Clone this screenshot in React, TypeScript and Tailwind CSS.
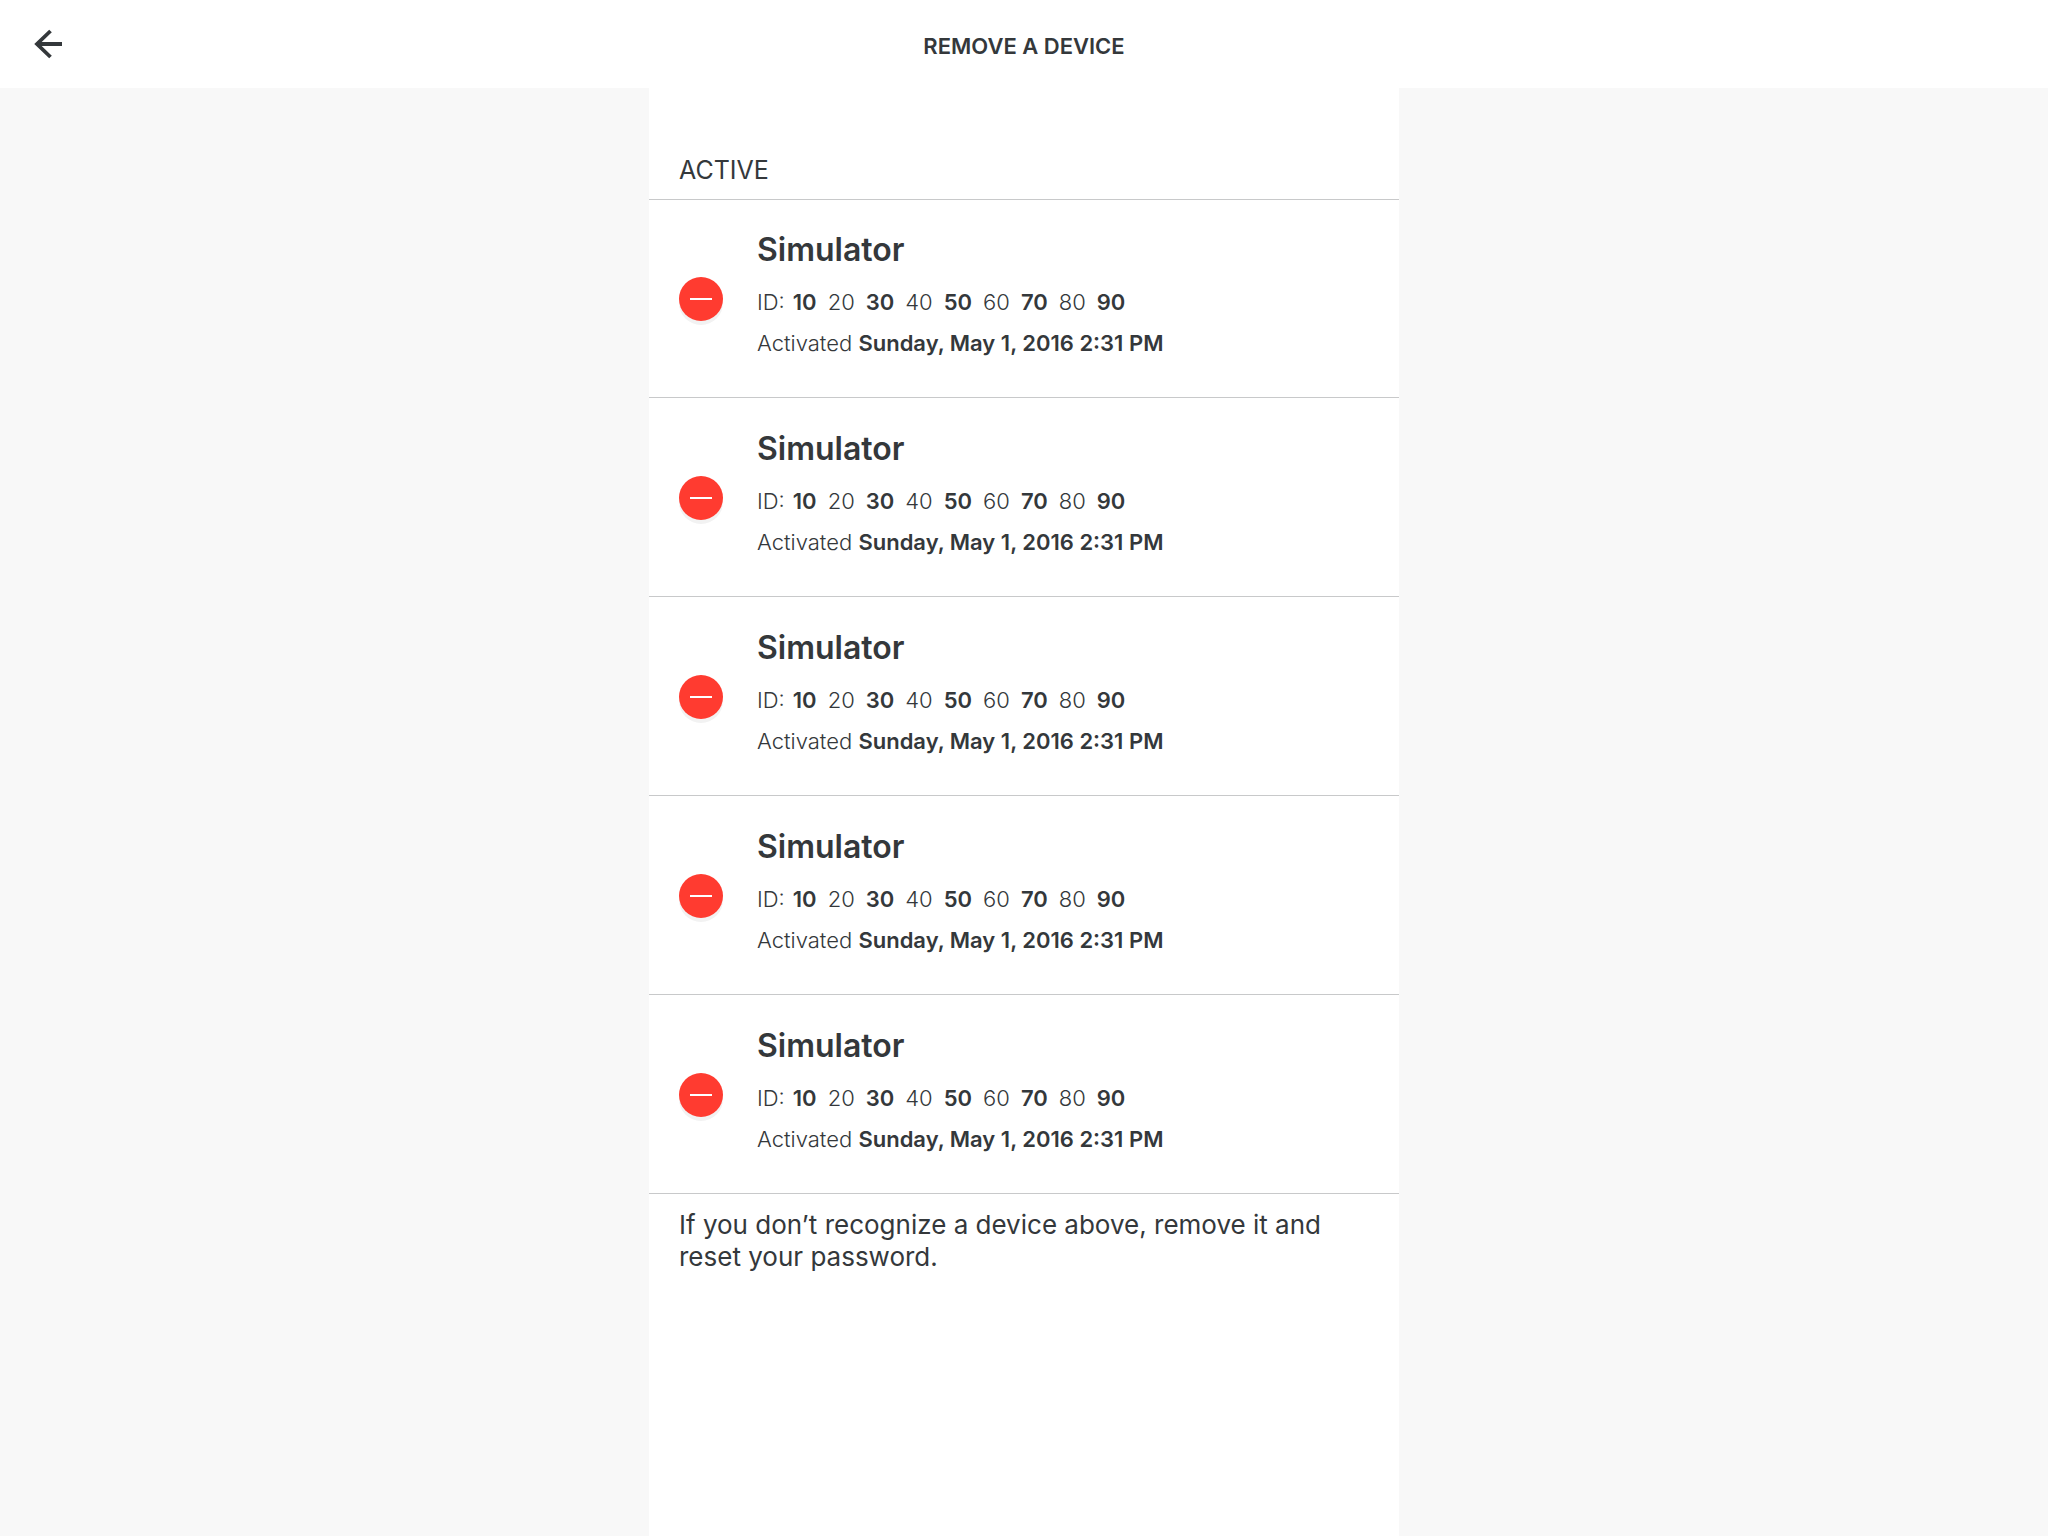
const devices = [1, 2, 3, 4, 5].map((id) => ({
  id,
  name: "Simulator",
  groups: ["10", "20", "30", "40", "50", "60", "70", "80", "90"],
  activated: "Sunday, May 1, 2016 2:31 PM",
}));

type Device = (typeof devices)[number];

function DeviceRow({ device }: { device: Device }) {
  return (
    <li className="flex items-center border-b border-[#c8c9ca] px-[30px] pt-[29px] pb-[27px]">
      <button
        type="button"
        aria-label={`Remove ${device.name}`}
        className="flex size-11 shrink-0 items-center justify-center rounded-full bg-[#ff3b30] shadow-[0_4px_0_#f2f2f2]"
      >
        <span className="h-0.5 w-[22px] bg-white" />
      </button>
      <div className="ml-[34px] pb-[6px]">
        <h3 className="text-[32px] leading-11 font-semibold">{device.name}</h3>
        <p className="mt-[10px] flex text-[22px] leading-[41px] font-light">
          <span className="mr-2">ID:</span>
          <span className="flex gap-[11px]">
            {device.groups.map((group, i) => (
              <span key={group} className={i % 2 === 0 ? "font-semibold" : "font-light"}>
                {group}
              </span>
            ))}
          </span>
        </p>
        <p className="text-[22px] leading-[41px] font-light">
          Activated <span className="font-semibold">{device.activated}</span>
        </p>
      </div>
    </li>
  );
}

export default function App() {
  return (
    <div className="flex min-h-screen flex-col bg-[#f8f8f8] font-['Inter',sans-serif] text-[#34383b]">
      <header className="grid h-[88px] grid-cols-[1fr_auto_1fr] items-center bg-white px-8">
        <button type="button" aria-label="Back" className="w-8">
          <svg viewBox="0 0 32 32" className="size-8" fill="none" stroke="currentColor" strokeWidth="3.8">
            <path d="M18.5 3 L5 16 L18.5 29 M5 16 H30" />
          </svg>
        </button>
        <h1 className="pt-1 text-[22px] font-semibold">REMOVE A DEVICE</h1>
      </header>
      <main className="mx-auto w-full max-w-[750px] flex-1 bg-white">
        <h2 className="border-b border-[#c8c9ca] px-[30px] pt-[66px] pb-[13px] text-[25px] leading-8">ACTIVE</h2>
        <ul className="-mt-px">
          {devices.map((device) => (
            <DeviceRow key={device.id} device={device} />
          ))}
        </ul>
        <p className="px-[30px] pt-[15px] text-[26px] leading-8">
          If you don’t recognize a device above, remove it and reset your password.
        </p>
      </main>
    </div>
  );
}
